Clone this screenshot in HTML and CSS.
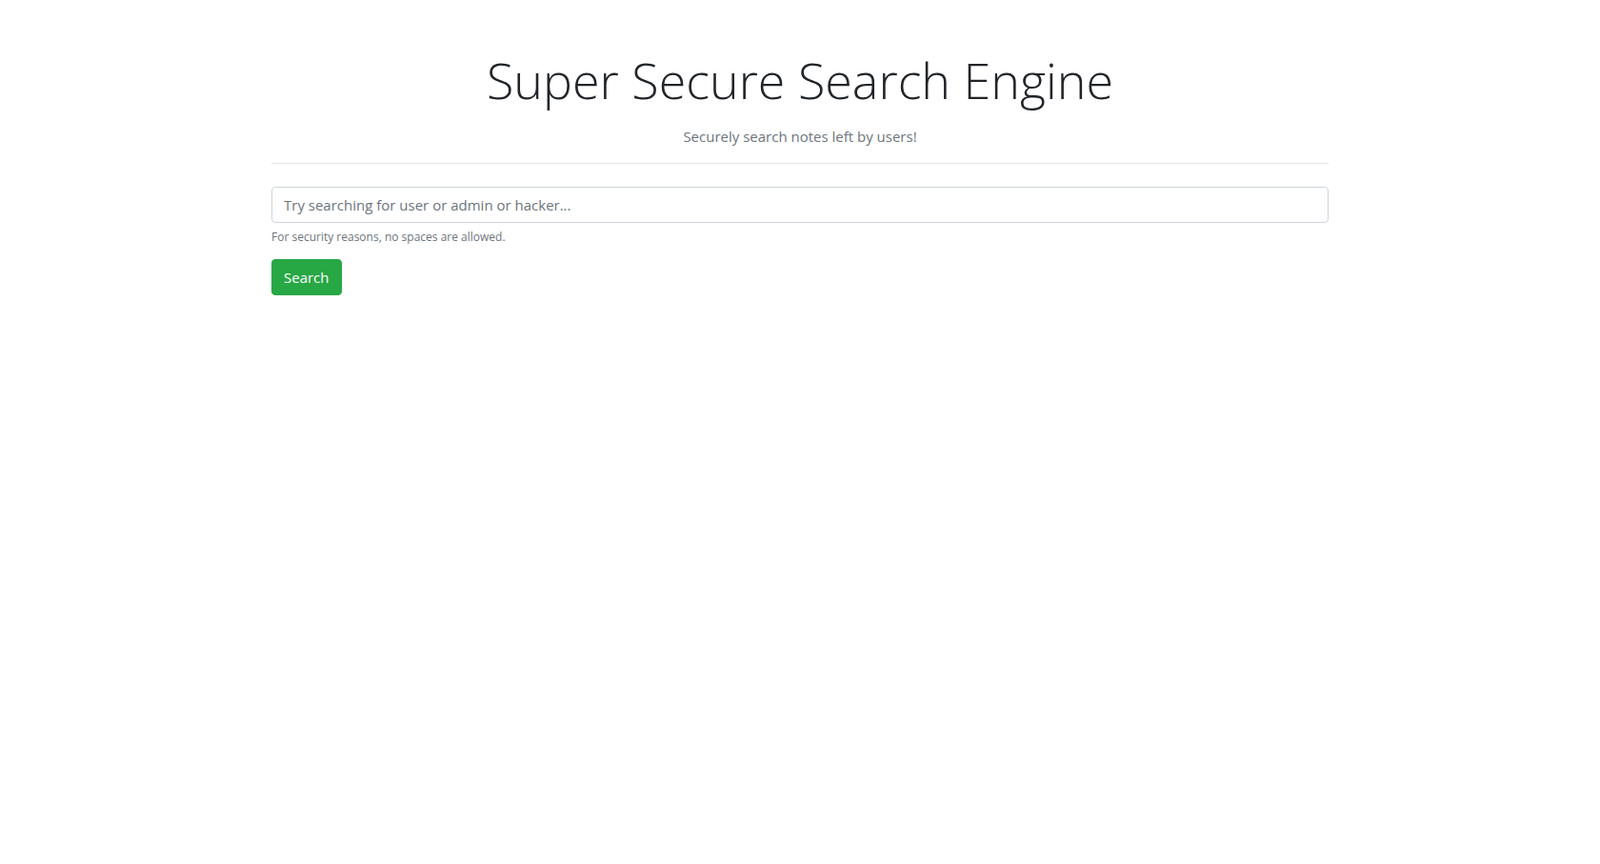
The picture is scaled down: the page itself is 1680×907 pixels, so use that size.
FILE: index.html
```html
<!DOCTYPE html>
<html lang="en">
<head>
<meta charset="utf-8">
<title>Super Secure Search Engine</title>
<link rel="stylesheet" href="styles.css">
</head>
<body>
<div class="container">
  <header class="header">
    <h1 class="title">Super Secure Search Engine</h1>
    <p class="subtitle">Securely search notes left by users!</p>
  </header>
  <hr class="divider">
  <form class="search-form" onsubmit="return false;">
    <div class="form-group">
      <input class="form-control" type="text" name="q" placeholder="Try searching for user or admin or hacker...">
      <small class="form-text">For security reasons, no spaces are allowed.</small>
    </div>
    <button class="btn-success" type="submit">Search</button>
  </form>
</div>
</body>
</html>
```

FILE: styles.css
```css
* { box-sizing: border-box; }
html, body { margin: 0; padding: 0; background: #fff; }
body {
  font-family: "Open Sans", "Noto Sans", "Liberation Sans", sans-serif;
  font-size: 16px;
  line-height: 1.5;
  color: #212529;
}
.container {
  width: 1140px;
  margin: 0 auto;
  padding: 0 15px;
}
.header {
  text-align: center;
  padding-top: 53px;
}
.title {
  margin: 0 0 8px 0;
  font-size: 52px;
  font-weight: 300;
  line-height: 1.2;
  color: #212529;
}
.subtitle {
  margin: 0;
  padding-top: 9px;
  font-size: 15px;
  color: #6c757d;
}
.divider {
  margin: 16px 0 24px;
  border: 0;
  border-top: 1px solid rgba(0,0,0,.1);
}
.form-group { margin-bottom: 14px; }
.form-control {
  display: block;
  width: 100%;
  height: 38px;
  padding: 6px 12px;
  font-family: inherit;
  font-size: 15px;
  color: #495057;
  background: #fff;
  border: 1px solid #ced4da;
  border-radius: 4px;
  outline: none;
}
.form-control::placeholder { color: #6c757d; opacity: 1; }
.form-text {
  display: block;
  margin-top: 6px;
  font-size: 12px;
  color: #6c757d;
}
.btn-success {
  display: inline-block;
  height: 38px;
  padding: 6px 12px;
  font-family: inherit;
  font-size: 15px;
  line-height: 1.5;
  color: #fff;
  background: #28a745;
  border: 1px solid #28a745;
  border-radius: 4px;
  cursor: pointer;
}
```
